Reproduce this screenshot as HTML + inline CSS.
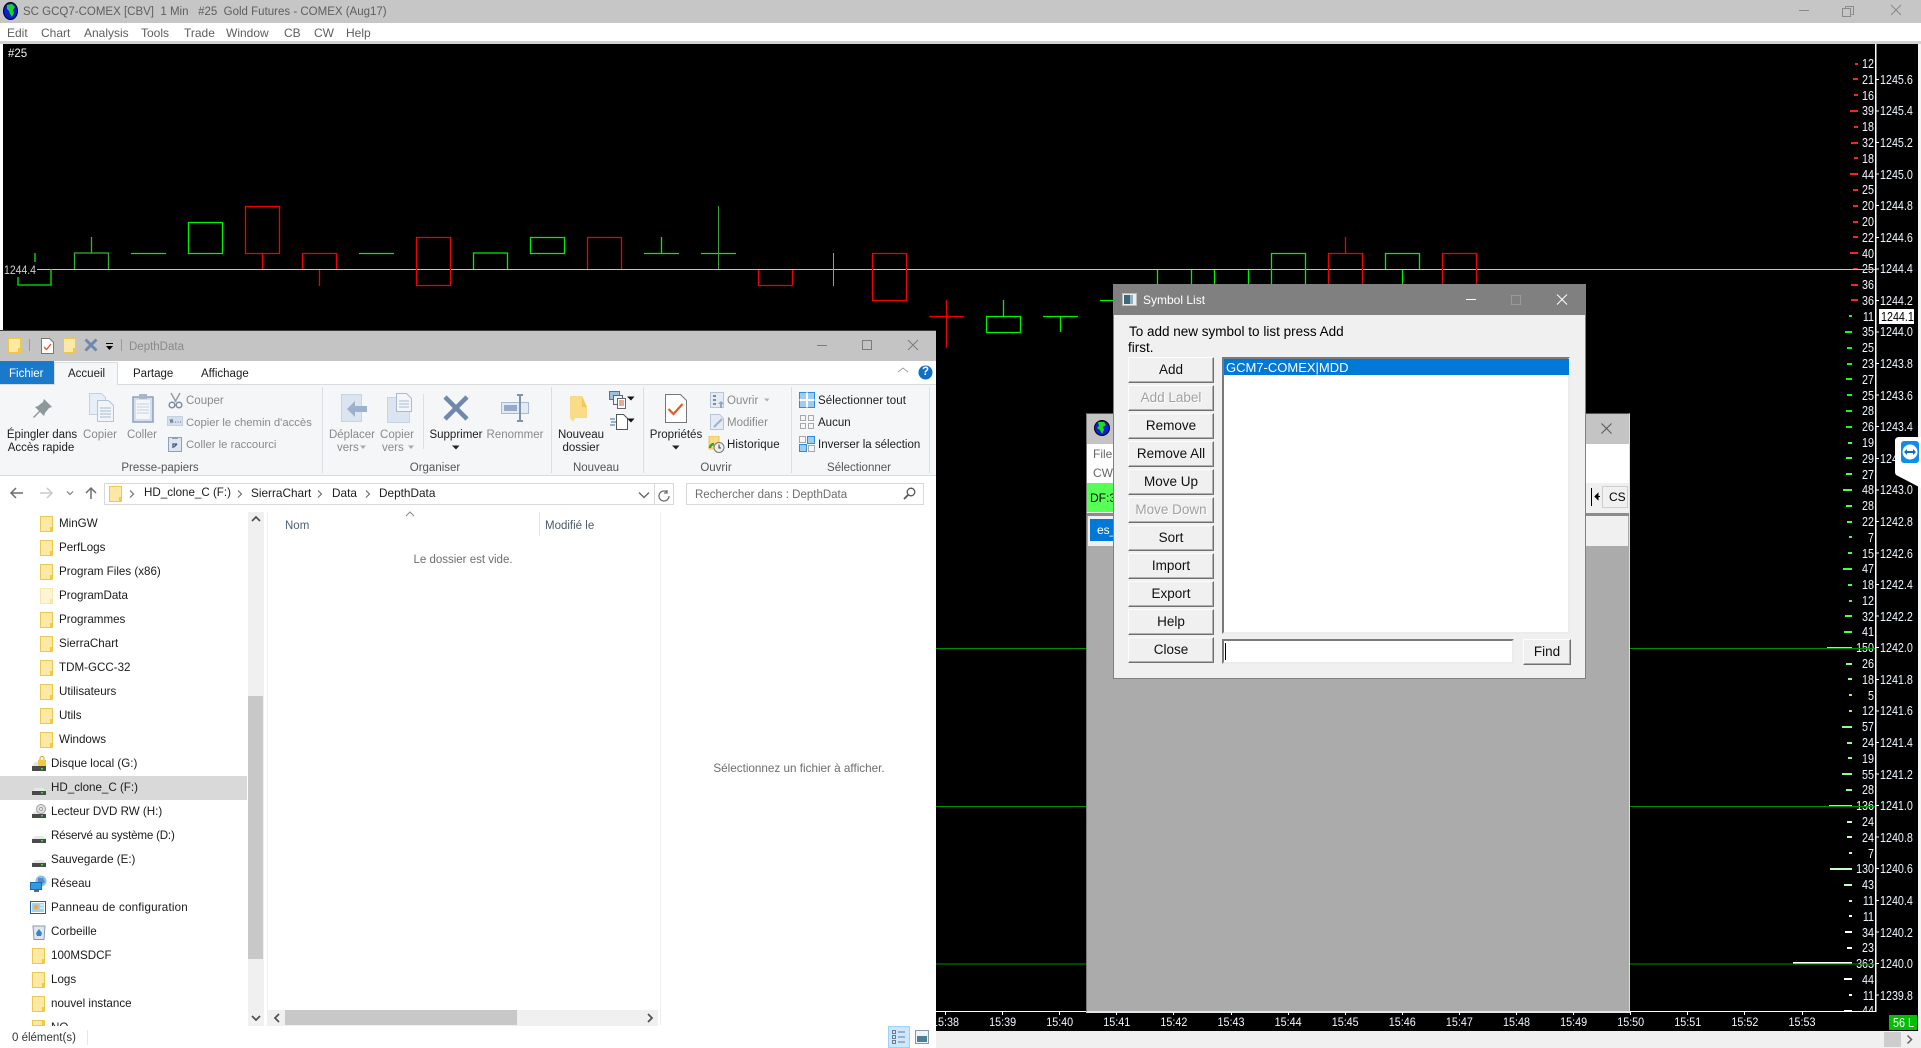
<!DOCTYPE html>
<html><head><meta charset="utf-8"><title>SC GCQ7-COMEX</title>
<style>
html,body{margin:0;padding:0;width:1921px;height:1048px;overflow:hidden;background:#fff}
body{position:relative;font-family:"Liberation Sans",sans-serif;font-size:11.5px;color:#1c1c1c}
div,svg{position:absolute}
.t{position:absolute;white-space:pre;line-height:14px;height:14px;margin-top:1px}
.c{transform:translateX(-50%);text-align:center}
.g{color:#8a8a8a}
.m{color:#5e5e5e;font-size:12px;top:25px}
.tree{font-size:11.6px;color:#1a1a1a}
.f{width:13px;height:16px;background:#fde9a5;border:1px solid #ecc84f;box-sizing:border-box}
.f:after{content:"";position:absolute;right:-1px;bottom:-1px;width:3px;height:5px;background:#f3c944}
.b{left:1128px;width:86px;height:26px;box-sizing:border-box;background:#f0f0f0;border:1px solid;border-color:#fdfdfd #707070 #707070 #fdfdfd;box-shadow:inset -1px -1px 0 #b0b0b0;text-align:center;line-height:23px;font-size:13.5px;color:#101010}
.d{color:#a0a0a0;text-shadow:1px 1px 0 #fff}
.sep{width:1px;background:#dcdfe3}
</style></head><body>

<!-- main SC window chrome -->
<div style="left:0;top:0;width:1921px;height:23px;background:#c6c6c6"></div>
<svg style="left:3px;top:2px" width="15" height="18" viewBox="0 0 15 18"><ellipse cx="7.5" cy="9" rx="7" ry="8.5" fill="#0a1fd0" stroke="#000"/><path d="M4 3l5-1 3 3-2 3 1 3-2 4-2-3-1-3-2-2z" fill="#19d51f"/></svg>
<div class="t" style="left:23px;top:4px;font-size:11.5px;color:#5e5e5e">SC GCQ7-COMEX [CBV]  1 Min   #25  Gold Futures - COMEX (Aug17)</div>
<svg style="left:1795px;top:2px" width="110" height="18"><path d="M4 8.500h10" stroke="#8a8a8a"/><path d="M50.500 4.500h8v8h-2M50.500 4.500v2M47.500 6.500h8v8h-8z" stroke="#8a8a8a" fill="none"/><path d="M96 3l10 10M106 3l-10 10" stroke="#8a8a8a" fill="none"/></svg>
<div class="t m" style="left:7px">Edit</div><div class="t m" style="left:41px">Chart</div><div class="t m" style="left:84px">Analysis</div><div class="t m" style="left:141px">Tools</div><div class="t m" style="left:184px">Trade</div><div class="t m" style="left:226px">Window</div><div class="t m" style="left:284px">CB</div><div class="t m" style="left:314px">CW</div><div class="t m" style="left:346px">Help</div>
<div style="left:0;top:41px;width:1921px;height:3px;background:#d2d2d2"></div>

<!-- chart -->
<svg style="left:0;top:0" width="1921" height="1048" viewBox="0 0 1921 1048" font-family="Liberation Sans, sans-serif">
<rect x="3" y="44" width="1915" height="987" fill="#000"/>
<text x="8" y="57" fill="#f0f0f0" font-size="11.5">#25</text>
<!-- bars -->
<g fill="#ff2020"><rect x="1855" y="63" width="3" height="2"/><rect x="1853" y="78" width="5" height="2"/><rect x="1854" y="94" width="4" height="2"/><rect x="1850" y="110" width="8" height="2"/><rect x="1854" y="126" width="4" height="2"/><rect x="1851" y="142" width="7" height="2"/><rect x="1854" y="157" width="4" height="2"/><rect x="1850" y="173" width="8" height="2"/><rect x="1853" y="189" width="5" height="2"/><rect x="1853" y="205" width="5" height="2"/><rect x="1853" y="221" width="5" height="2"/><rect x="1853" y="236" width="5" height="2"/><rect x="1850" y="252" width="8" height="2"/><rect x="1853" y="268" width="5" height="2"/><rect x="1851" y="284" width="7" height="2"/><rect x="1851" y="299" width="7" height="2"/></g>
<g fill="#10ff10"><rect x="1849" y="315" width="3" height="2"/><rect x="1845" y="331" width="7" height="2"/><rect x="1847" y="347" width="5" height="2"/><rect x="1847" y="363" width="5" height="2"/><rect x="1846" y="378" width="6" height="2"/><rect x="1847" y="394" width="5" height="2"/><rect x="1846" y="410" width="6" height="2"/><rect x="1846" y="426" width="6" height="2"/></g>
<g fill="#48ff48"><rect x="1848" y="442" width="4" height="2"/><rect x="1846" y="457" width="6" height="2"/><rect x="1846" y="473" width="6" height="2"/><rect x="1843" y="489" width="9" height="2"/><rect x="1846" y="505" width="6" height="2"/><rect x="1847" y="521" width="5" height="2"/><rect x="1849" y="536" width="3" height="2"/><rect x="1848" y="552" width="4" height="2"/><rect x="1843" y="568" width="9" height="2"/><rect x="1848" y="584" width="4" height="2"/><rect x="1849" y="600" width="3" height="2"/><rect x="1845" y="615" width="7" height="2"/><rect x="1844" y="631" width="8" height="2"/></g>
<g fill="#88ff88"><rect x="1827" y="647" width="25" height="2"/><rect x="1846" y="663" width="6" height="2"/><rect x="1848" y="678" width="4" height="2"/><rect x="1849" y="694" width="3" height="2"/><rect x="1849" y="710" width="3" height="2"/><rect x="1842" y="726" width="10" height="2"/><rect x="1847" y="742" width="5" height="2"/><rect x="1848" y="757" width="4" height="2"/><rect x="1842" y="773" width="10" height="2"/><rect x="1846" y="789" width="6" height="2"/><rect x="1829" y="805" width="23" height="2"/></g>
<g fill="#c0ffc0"><rect x="1847" y="821" width="5" height="2"/><rect x="1847" y="836" width="5" height="2"/><rect x="1849" y="852" width="3" height="2"/><rect x="1830" y="868" width="22" height="2"/><rect x="1844" y="884" width="8" height="2"/><rect x="1849" y="900" width="3" height="2"/></g>
<g fill="#fff"><rect x="1849" y="915" width="3" height="2"/><rect x="1845" y="931" width="7" height="2"/><rect x="1847" y="947" width="5" height="2"/><rect x="1793" y="962" width="59" height="2"/><rect x="1844" y="978" width="8" height="2"/><rect x="1849" y="994" width="3" height="2"/><rect x="1844" y="1010" width="8" height="2"/></g>
<!-- depth numbers -->
<g transform="translate(1874 0) scale(.86 1)" fill="#eef6ff" font-size="12.5" text-anchor="end">
<text y="68">12</text><text y="84">21</text><text y="100">16</text><text y="115">39</text><text y="131">18</text><text y="147">32</text><text y="163">18</text><text y="179">44</text><text y="194">25</text><text y="210">20</text><text y="226">20</text><text y="242">22</text><text y="258">40</text><text y="273">25</text><text y="289">36</text><text y="305">36</text><text y="321">11</text><text y="336">35</text><text y="352">25</text><text y="368">23</text><text y="384">27</text><text y="400">25</text><text y="415">28</text><text y="431">26</text><text y="447">19</text><text y="463">29</text><text y="479">27</text><text y="494">48</text><text y="510">28</text><text y="526">22</text><text y="542">7</text><text y="558">15</text><text y="573">47</text><text y="589">18</text><text y="605">12</text><text y="621">32</text><text y="636">41</text><text y="652">150</text><text y="668">26</text><text y="684">18</text><text y="700">5</text><text y="715">12</text><text y="731">57</text><text y="747">24</text><text y="763">19</text><text y="779">55</text><text y="794">28</text><text y="810">136</text><text y="826">24</text><text y="842">24</text><text y="858">7</text><text y="873">130</text><text y="889">43</text><text y="905">11</text><text y="921">11</text><text y="937">34</text><text y="952">23</text><text y="968">363</text><text y="984">44</text><text y="1000">11</text><text y="1015">44</text>
</g>
<!-- price labels -->
<g transform="translate(1880 0) scale(.86 1)" fill="#eef6ff" font-size="12.5">
<text y="84">1245.6</text><text y="115">1245.4</text><text y="147">1245.2</text><text y="179">1245.0</text><text y="210">1244.8</text><text y="242">1244.6</text><text y="273">1244.4</text><text y="305">1244.2</text><text y="336">1244.0</text><text y="368">1243.8</text><text y="400">1243.6</text><text y="431">1243.4</text><text y="463">1243.2</text><text y="494">1243.0</text><text y="526">1242.8</text><text y="558">1242.6</text><text y="589">1242.4</text><text y="621">1242.2</text><text y="652">1242.0</text><text y="684">1241.8</text><text y="715">1241.6</text><text y="747">1241.4</text><text y="779">1241.2</text><text y="810">1241.0</text><text y="842">1240.8</text><text y="873">1240.6</text><text y="905">1240.4</text><text y="937">1240.2</text><text y="968">1240.0</text><text y="1000">1239.8</text>
</g>
<path fill="none" stroke="#fff" d="M1876 79.500h3M1876 111h3M1876 142.500h3M1876 174h3M1876 205.500h3M1876 237.500h3M1876 269h3M1876 300.500h3M1876 332h3M1876 363.500h3M1876 395h3M1876 426.500h3M1876 458.500h3M1876 490h3M1876 521.500h3M1876 553h3M1876 584.500h3M1876 616h3M1876 647.500h3M1876 679.500h3M1876 711h3M1876 742.500h3M1876 774h3M1876 805.500h3M1876 837h3M1876 868.500h3M1876 900.500h3M1876 932h3M1876 963.500h3M1876 995h3"/>
<rect x="1879" y="309" width="35" height="15" fill="#fff"/>
<g transform="translate(1881 0) scale(.86 1)" fill="#000" font-size="12.5"><text y="321">1244.1</text></g>
<!-- level lines -->
<path stroke="#c4c4c4" stroke-width="1" d="M37 269.500H1875"/>
<path stroke="#009000" stroke-width="1" d="M936 648.500H1875M936 806.500H1875M936 964H1875"/>
<!-- candles -->
<g fill="none" stroke="#00f000" stroke-width="1.3">
<path d="M18 269v16h33v-16M35 253v16"/>
<path d="M74.500 269v-16h34v16M91.500 253v-16" stroke="#2fb52f"/>
<path d="M131 253.500h35"/>
<path d="M188.500 222.500h34v31h-34z"/>
<path d="M359 253.500h35"/>
<path d="M473.500 269v-16h34v16"/>
<path d="M530.500 237.500h34v16h-34z"/>
<path d="M644 253.500h35M661.500 253v-16"/>
<path d="M701 253.500h35"/><path d="M718.500 269V206" stroke="#3fa03f" stroke-width="1"/>
<path d="M833.500 253v33" stroke="#7fb07f" stroke-width="1"/>
<path d="M1043 316.500h35M1060.500 316v16"/>
<path d="M986.500 316.500h34v16h-34zM1003.500 316v-16"/>
<path d="M1100 300.500h20"/>
<path d="M1157.500 270v20M1191.500 270v20M1214.500 270v20M1248.500 270v20"/>
<path d="M1271.500 290V253.500h34V290"/>
<path d="M1385.500 269V253.500h34V269M1402.500 270v20"/>
</g>
<g fill="none" stroke="#f00000" stroke-width="1.3">
<path d="M245.500 206.500h34v47h-34zM262.500 254v15"/>
<path d="M302.500 269V253.500h34V269M319.500 270v16"/>
<path d="M416.500 237.500h34v48h-34z"/>
<path d="M587.500 269V237.500h34V269"/>
<path d="M758.500 270v15.500h34V270"/>
<path d="M872.500 253.500h34v47h-34z"/>
<path d="M929 316.500h35M946.500 300v48"/>
<path d="M1328.500 290V253.500h34V290M1345.500 253v-16"/>
<path d="M1442.500 290V253.500h34V290"/>
</g>
<rect x="3" y="262" width="34" height="15" fill="#000"/>
<text x="4" y="274" fill="#d0d0d0" font-size="12" textLength="32" lengthAdjust="spacingAndGlyphs">1244.4</text>
<!-- axes -->
<rect x="1875" y="44" width="1.500" height="968" fill="#fff"/>
<rect x="936" y="1012" width="982" height="19" fill="#000"/>
<rect x="936" y="1011" width="940" height="1" fill="#fff"/>
<path stroke="#fff" d="M945.500 1011v4M1002.500 1011v4M1059.500 1011v4M1116.500 1011v4M1173.500 1011v4M1231.500 1011v4M1288.500 1011v4M1345.500 1011v4M1402.500 1011v4M1459.500 1011v4M1516.500 1011v4M1573.500 1011v4M1630.500 1011v4M1687.500 1011v4M1744.500 1011v4M1802.500 1011v4"/>
<g fill="#f0f6ff" font-size="12" text-anchor="middle">
<text x="945.500" y="1026" textLength="27" lengthAdjust="spacingAndGlyphs">15:38</text><text x="1002.600" y="1026" textLength="27" lengthAdjust="spacingAndGlyphs">15:39</text><text x="1059.700" y="1026" textLength="27" lengthAdjust="spacingAndGlyphs">15:40</text><text x="1116.800" y="1026" textLength="27" lengthAdjust="spacingAndGlyphs">15:41</text><text x="1173.900" y="1026" textLength="27" lengthAdjust="spacingAndGlyphs">15:42</text><text x="1231" y="1026" textLength="27" lengthAdjust="spacingAndGlyphs">15:43</text><text x="1288.100" y="1026" textLength="27" lengthAdjust="spacingAndGlyphs">15:44</text><text x="1345.200" y="1026" textLength="27" lengthAdjust="spacingAndGlyphs">15:45</text><text x="1402.300" y="1026" textLength="27" lengthAdjust="spacingAndGlyphs">15:46</text><text x="1459.400" y="1026" textLength="27" lengthAdjust="spacingAndGlyphs">15:47</text><text x="1516.500" y="1026" textLength="27" lengthAdjust="spacingAndGlyphs">15:48</text><text x="1573.600" y="1026" textLength="27" lengthAdjust="spacingAndGlyphs">15:49</text><text x="1630.700" y="1026" textLength="27" lengthAdjust="spacingAndGlyphs">15:50</text><text x="1687.800" y="1026" textLength="27" lengthAdjust="spacingAndGlyphs">15:51</text><text x="1744.900" y="1026" textLength="27" lengthAdjust="spacingAndGlyphs">15:52</text><text x="1802" y="1026" textLength="27" lengthAdjust="spacingAndGlyphs">15:53</text>
</g>
<rect x="1889" y="1015" width="28" height="15" fill="#00c000"/>
<text x="1893" y="1027" fill="#fff" font-size="12.5" textLength="21" lengthAdjust="spacingAndGlyphs">56 L</text>
<!-- right strip & bottom scrollbar -->
<rect x="936" y="1031" width="985" height="17" fill="#f0f0f0"/>
<rect x="1884" y="1032" width="17" height="15" fill="#cdcdcd"/>
<path d="M1907.500 1035.500l4 4-4 4" fill="none" stroke="#606060" stroke-width="1.500"/>
<rect x="1918" y="44" width="3" height="987" fill="#f4f4f4"/>
</svg>

<!-- TeamViewer tab -->
<svg style="left:1894px;top:436px" width="27" height="54" viewBox="0 0 27 54"><path d="M27 1H5Q1 1 1 5V36Q1 39 4 40L27 52z" fill="#fff"/><rect x="7" y="5" width="18" height="22" rx="3" fill="#0e8ee9"/><circle cx="16" cy="16" r="7.500" fill="#fff"/><path d="M10 16l3-3v2h6v-2l3 3-3 3v-2h-6v2z" fill="#0e6fbe"/></svg>

<!-- background SC window -->
<div style="left:1086px;top:413px;width:544px;height:600px;background:#ababab;border-left:1px solid #7a7a7a;border-top:1px solid #555;border-right:1px solid #ddd;border-bottom:2px solid #e6e6e6;box-sizing:border-box"></div>
<div style="left:1087px;top:414px;width:542px;height:30px;background:#c4c4c4"></div>
<svg style="left:1094px;top:420px" width="16" height="16" viewBox="0 0 16 16"><circle cx="8" cy="8" r="7.500" fill="#0a1fd0" stroke="#000"/><path d="M4 2l6 0 2 3-3 2 1 3-2 4-2-4-3-2 2-2z" fill="#19e01f"/></svg>
<svg style="left:1601px;top:423px" width="11" height="11"><path d="M.5.500l10 10M10.500.500l-10 10" stroke="#555" fill="none"/></svg>
<div style="left:1087px;top:444px;width:542px;height:39px;background:#fff"></div>
<div class="t" style="left:1093px;top:446px;font-size:12px;color:#666">File</div>
<div class="t" style="left:1093px;top:465px;font-size:12px;color:#666">CW</div>
<div style="left:1087px;top:483px;width:542px;height:30px;background:#f0f0f0"></div>
<div style="left:1087px;top:483px;width:30px;height:29px;background:#55ff55"></div>
<div class="t" style="left:1090px;top:490px;font-size:12px;color:#000">DF:3</div>
<div style="left:1087px;top:513px;width:542px;height:3px;background:#8c8c8c"></div>
<div style="left:1088px;top:516px;width:540px;height:30px;background:#f0f0f0"></div>
<div style="left:1090px;top:519px;width:30px;height:22px;background:#0078d7"></div>
<div class="t" style="left:1097px;top:522px;font-size:12px;color:#fff">es_</div>
<svg style="left:1586px;top:486px" width="44" height="22"><path d="M5.500 2v18" stroke="#000" fill="none"/><path d="M14 10.500h-5M9 10.500l3-3v6z" stroke="#000" fill="#000"/><rect x="16.500" y=".5" width="25" height="21" fill="#f0f0f0" stroke="#cfcfcf"/></svg>
<div class="t" style="left:1609px;top:489px;font-size:12px;color:#000">CS</div>

<!-- Symbol List dialog -->
<div style="left:1113px;top:284px;width:473px;height:395px;background:#f0f0f0;border:1px solid #808080;box-sizing:border-box"></div>
<div style="left:1113px;top:284px;width:473px;height:31px;background:#808080"></div>
<svg style="left:1122px;top:293px" width="15" height="13" viewBox="0 0 15 13"><rect x=".5" y=".5" width="14" height="12" fill="#eee" stroke="#bbb"/><rect x="2" y="2" width="6" height="9" fill="#3a6a78"/><rect x="8" y="2" width="3" height="9" fill="#8fb2c0"/></svg>
<div class="t" style="left:1143px;top:292px;font-size:12px;color:#fff">Symbol List</div>
<svg style="left:1460px;top:290px" width="115" height="20"><path d="M6 9.500h10" stroke="#fff" fill="none"/><rect x="51.500" y="5.500" width="9" height="9" fill="none" stroke="#9a9a9a"/><path d="M97 4.500l10 10M107 4.500l-10 10" stroke="#fff" fill="none"/></svg>
<div class="t" style="left:1129px;top:324px;font-size:13.5px;color:#000">To add new symbol to list press Add</div>
<div class="t" style="left:1128px;top:340px;font-size:13.5px;color:#000">first.</div>
<div class="b" style="top:357px">Add</div>
<div class="b d" style="top:385px">Add Label</div>
<div class="b" style="top:413px">Remove</div>
<div class="b" style="top:441px">Remove All</div>
<div class="b" style="top:469px">Move Up</div>
<div class="b d" style="top:497px">Move Down</div>
<div class="b" style="top:525px">Sort</div>
<div class="b" style="top:553px">Import</div>
<div class="b" style="top:581px">Export</div>
<div class="b" style="top:609px">Help</div>
<div class="b" style="top:637px">Close</div>
<div style="left:1222px;top:357px;width:348px;height:277px;background:#fff;border:2px solid;border-color:#7a7a7a #ececec #ececec #7a7a7a;box-sizing:border-box"></div>
<div style="left:1224px;top:359px;width:345px;height:16px;background:#0078d7"></div>
<div class="t" style="left:1226px;top:360px;font-size:13px;color:#fff">GCM7-COMEX|MDD</div>
<div style="left:1222px;top:639px;width:292px;height:25px;background:#fff;border:2px solid;border-color:#7a7a7a #ececec #ececec #7a7a7a;box-sizing:border-box"></div>
<div style="left:1225px;top:643px;width:1px;height:17px;background:#000"></div>
<div class="b" style="left:1523px;top:639px;width:48px;height:26px">Find</div>

<!-- Explorer window -->
<div style="left:0;top:330px;width:936px;height:718px;background:#fff;overflow:hidden"></div>
<div style="left:0;top:330px;width:936px;height:1px;background:#3a3a3a"></div>
<div style="left:0;top:331px;width:936px;height:30px;background:#c4c4c4"></div>
<div class="f" style="left:8px;top:338px;height:15px"></div>
<div style="left:29px;top:339px;width:1px;height:12px;background:#9a9a9a"></div>
<svg style="left:41px;top:338px" width="13" height="16"><path d="M.5.500h8l4 4v11H.5z" fill="#fff" stroke="#777"/><path d="M3 9l2.500 2.500L10 6" stroke="#e8521a" fill="none" stroke-width="1.300"/></svg>
<div class="f" style="left:63px;top:338px;height:15px"></div>
<svg style="left:84px;top:338px" width="14" height="14"><path d="M1.500 1.500l11 11M12.500 1.500l-11 11" stroke="#6f88ad" stroke-width="3" fill="none"/></svg>
<svg style="left:105px;top:342px" width="9" height="9"><path d="M1 1.500h7" stroke="#000"/><path d="M1 4h7l-3.500 4z" fill="#000"/></svg>
<div style="left:121px;top:339px;width:1px;height:12px;background:#9a9a9a"></div>
<div class="t g" style="left:129px;top:339px;font-size:11.5px">DepthData</div>
<svg style="left:815px;top:336px" width="110" height="18"><path d="M2 9.500h10" stroke="#7c7c7c" fill="none"/><rect x="47.500" y="4.500" width="9" height="9" fill="none" stroke="#7c7c7c"/><path d="M93 4l10 10M103 4l-10 10" stroke="#7c7c7c" fill="none"/></svg>

<!-- ribbon -->
<div style="left:0;top:361px;width:936px;height:23px;background:#fff"></div>
<div style="left:0;top:384px;width:936px;height:92px;background:#f5f6f7;border-top:1px solid #dadbdc;border-bottom:1px solid #dadbdc;box-sizing:border-box"></div>
<div style="left:0;top:361px;width:54px;height:23px;background:#1979ca"></div>
<div class="t" style="left:9px;top:366px;color:#fff">Fichier</div>
<div style="left:54px;top:362px;width:64px;height:23px;background:#f5f6f7;border:1px solid #dadbdc;border-bottom:0;box-sizing:border-box"></div>
<div class="t" style="left:68px;top:366px">Accueil</div>
<div class="t" style="left:133px;top:366px">Partage</div>
<div class="t" style="left:201px;top:366px">Affichage</div>
<svg style="left:897px;top:366px" width="12" height="8"><path d="M1 6l5-4 5 4" fill="none" stroke="#a0a0a0"/></svg>
<svg style="left:918px;top:365px" width="15" height="15"><circle cx="7.500" cy="7.500" r="7" fill="#0f6fc6"/></svg>
<div class="t" style="left:922px;top:365px;color:#fff;font-weight:bold;font-size:11.5px;line-height:13px">?</div>

<!-- clipboard group -->
<svg style="left:31px;top:398px" width="22" height="22" viewBox="0 0 22 22"><path d="M13 1l8 8-3 1-4 5-1 3-4-4-6 6-1-1 6-6-4-4 3-1 5-4z" fill="#8e979c"/></svg>
<svg style="left:89px;top:393px" width="25" height="29" viewBox="0 0 25 29"><path d="M.5.500h12l4 4v17H.5z" fill="#e8eef7" stroke="#c5d0df"/><path d="M8.500 7.500h11l5 5v16h-16z" fill="#f1f4f9" stroke="#b5c3d6"/><path d="M11 15h11M11 18h11M11 21h11M11 24h11" stroke="#a9bbd2"/></svg>
<svg style="left:132px;top:393px" width="22" height="30" viewBox="0 0 22 30"><rect x="1" y="4" width="20" height="25" fill="#d6deec" stroke="#8b9fbd" stroke-width="1.500"/><rect x="4" y="7" width="14" height="19" fill="#f3f6fb"/><rect x="7" y="1" width="8" height="5" fill="#a7b5c8"/><path d="M5 11h12M5 14h12M5 17h12M5 20h12" stroke="#c5d0e0"/></svg>
<svg style="left:168px;top:392px" width="15" height="17" viewBox="0 0 15 17"><path d="M3 1l5 9M12 1l-5 9" stroke="#9a9fa6" stroke-width="1.500" fill="none"/><circle cx="4" cy="13" r="2.800" fill="none" stroke="#7c8ca3" stroke-width="1.500"/><circle cx="11" cy="13" r="2.800" fill="none" stroke="#7c8ca3" stroke-width="1.500"/></svg>
<svg style="left:167px;top:416px" width="16" height="10"><rect x=".5" y=".5" width="15" height="9" fill="#d3deee" stroke="#c4cfdf"/><path d="M3 3l1 4 1-4 1 4M8 6h1M10.500 6h1M13 6h1" stroke="#6d7f97" fill="none"/></svg>
<svg style="left:168px;top:436px" width="14" height="16"><rect x=".5" y="1.500" width="13" height="14" fill="#dde5f1" stroke="#8fa1ba"/><path d="M4 1h6v2H4z" fill="#8fa1ba"/><path d="M5 12V8h4M9 8L6 11" stroke="#46597a" fill="none" stroke-width="1.300"/></svg>
<div class="t c" style="left:42px;top:427px">Épingler dans</div>
<div class="t c" style="left:41px;top:440px">Accès rapide</div>
<div class="t c g" style="left:100px;top:427px">Copier</div>
<div class="t c g" style="left:142px;top:427px">Coller</div>
<div class="t g" style="left:186px;top:393px">Couper</div>
<div class="t g" style="left:186px;top:415px;font-size:11.3px">Copier le chemin d'accès</div>
<div class="t g" style="left:186px;top:437px;font-size:11.3px">Coller le raccourci</div>
<div class="t c" style="left:160px;top:460px;color:#555">Presse-papiers</div>
<div class="sep" style="left:322px;top:387px;height:86px"></div>

<!-- organise group -->
<svg style="left:341px;top:394px" width="27" height="28" viewBox="0 0 27 28"><rect x=".5" y=".5" width="20" height="27" fill="#dbe4f1" stroke="#c8d4e6"/><path d="M26 16h-12v-5l-8 8 8 8v-5h12z" transform="translate(0 -4)" fill="#9db1cd"/></svg>
<svg style="left:387px;top:392px" width="26" height="31" viewBox="0 0 26 31"><rect x=".5" y="5.500" width="22" height="25" fill="#dbe4f1" stroke="#c8d4e6"/><path d="M9.500 1.500h10l5 5v13h-15z" fill="#f4f6fa" stroke="#a9bbd2"/><path d="M12 9h10M12 12h10M12 15h10" stroke="#a9bbd2"/></svg>
<div class="t c g" style="left:352px;top:427px">Déplacer</div>
<div class="t g" style="left:337px;top:440px">vers</div>
<svg style="left:360px;top:445px" width="7" height="5"><path d="M0 .5h6L3 4z" fill="#a8a8a8"/></svg>
<div class="t c g" style="left:397px;top:427px">Copier</div>
<div class="t g" style="left:382px;top:440px">vers</div>
<svg style="left:408px;top:445px" width="7" height="5"><path d="M0 .5h6L3 4z" fill="#a8a8a8"/></svg>
<div class="sep" style="left:423px;top:394px;height:55px"></div>
<svg style="left:443px;top:395px" width="26" height="26" viewBox="0 0 26 26"><path d="M2 2l22 22M24 2L2 24" stroke="#6f88ad" stroke-width="4.500" fill="none"/></svg>
<div class="t c" style="left:456px;top:427px">Supprimer</div>
<svg style="left:452px;top:445px" width="8" height="5"><path d="M0 .5h7.500L4 4.500z" fill="#222"/></svg>
<svg style="left:500px;top:394px" width="30" height="28" viewBox="0 0 30 28"><rect x="1.500" y="8.500" width="27" height="11" fill="#e2eaf4" stroke="#a9bbd2"/><rect x="4" y="11" width="13" height="6" fill="#95aac8"/><path d="M17 1h6M17 27h6M20 1v26" stroke="#7f93ad" stroke-width="2" fill="none"/></svg>
<div class="t c g" style="left:515px;top:427px">Renommer</div>
<div class="t c" style="left:435px;top:460px;color:#555">Organiser</div>
<div class="sep" style="left:551px;top:387px;height:86px"></div>

<!-- new group -->
<svg style="left:569px;top:395px" width="20" height="28" viewBox="0 0 20 28"><path d="M1 1h12v11h5v11H6l-2 4-3-4z" fill="#fbdc86"/><path d="M13 1l5 11h-5z" fill="#f2c856"/></svg>
<svg style="left:609px;top:391px" width="22" height="18" viewBox="0 0 22 18"><rect x=".5" y=".5" width="10" height="8" fill="#9cc0e0" stroke="#3f79ad"/><rect x="4.500" y="4.500" width="9" height="9" fill="#eef3fa" stroke="#666"/><rect x="8.500" y="7.500" width="8" height="10" fill="#fff" stroke="#666"/><path d="M10 10h5M10 12h5M10 14h5" stroke="#d0532b"/></svg>
<svg style="left:627px;top:396px" width="8" height="5"><path d="M0 .5h7.500L4 4.500z" fill="#111"/></svg>
<svg style="left:610px;top:413px" width="18" height="18" viewBox="0 0 18 18"><path d="M6.500 1.500h7l4 4v11h-11z" fill="#fff" stroke="#555"/><path d="M0 6h5M1 9h5M0 12h5" stroke="#2f6fb0"/></svg>
<svg style="left:627px;top:418px" width="8" height="5"><path d="M0 .5h7.500L4 4.500z" fill="#111"/></svg>
<div class="t c" style="left:581px;top:427px">Nouveau</div>
<div class="t c" style="left:581px;top:440px">dossier</div>
<div class="t c" style="left:596px;top:460px;color:#555">Nouveau</div>
<div class="sep" style="left:643px;top:387px;height:86px"></div>

<!-- open group -->
<svg style="left:665px;top:394px" width="22" height="29" viewBox="0 0 22 29"><path d="M.5.500h15l6 6v22H.5z" fill="#fff" stroke="#777"/><path d="M3.500 15l5 5 9-10" stroke="#ec5a1c" fill="none" stroke-width="2.200"/></svg>
<div class="t c" style="left:676px;top:427px">Propriétés</div>
<svg style="left:672px;top:445px" width="8" height="5"><path d="M0 .5h7.500L4 4.500z" fill="#222"/></svg>
<svg style="left:710px;top:392px" width="15" height="17"><rect x=".5" y=".5" width="13" height="15" fill="#e5ebf4" stroke="#b8c5d8"/><path d="M3 4h3M3 8h3M3 12h3" stroke="#7a8ca8" stroke-width="2"/><path d="M8 12l3-3 3 3h-2v4h-2v-4z" fill="#8fa5c4"/></svg>
<svg style="left:710px;top:414px" width="15" height="16"><path d="M.5.500h9l4 4v11H.5z" fill="#e5ebf4" stroke="#b8c5d8"/><path d="M4 13l8-8" stroke="#9db1cd" stroke-width="2"/></svg>
<svg style="left:708px;top:436px" width="17" height="17" viewBox="0 0 17 17"><path d="M1 0h10v13H1z" fill="#fbdc86" stroke="#e2b93c" stroke-width=".8"/><circle cx="11" cy="11.500" r="5" fill="#f0f0f0" stroke="#777"/><path d="M11 8.500v3.500h2" stroke="#333" fill="none"/><path d="M2 12a4 4 0 0 1 4-4" stroke="#2fa52f" stroke-width="2.500" fill="none"/></svg>
<div class="t g" style="left:727px;top:393px">Ouvrir</div>
<svg style="left:764px;top:398px" width="6" height="4"><path d="M0 .5h5.500L3 3.500z" fill="#b0b0b0"/></svg>
<div class="t g" style="left:727px;top:415px">Modifier</div>
<div class="t" style="left:727px;top:437px;letter-spacing:.1px">Historique</div>
<div class="t c" style="left:716px;top:460px;color:#555">Ouvrir</div>
<div class="sep" style="left:791px;top:387px;height:86px"></div>

<!-- select group -->
<svg style="left:799px;top:392px" width="16" height="16"><rect x=".5" y=".5" width="15" height="15" fill="#9fcdf2" stroke="#2c8ede"/><path d="M8 .5v15M.5 8h15" stroke="#fff" stroke-width="2"/></svg>
<svg style="left:800px;top:415px" width="15" height="15"><g fill="none" stroke="#a8a8a8"><rect x=".5" y=".5" width="5" height="5"/><rect x="8.500" y=".5" width="5" height="5"/><rect x=".5" y="8.500" width="5" height="5"/><rect x="8.500" y="8.500" width="5" height="5"/></g></svg>
<svg style="left:799px;top:436px" width="16" height="16"><rect x="8.500" y=".5" width="7" height="7" fill="#9fcdf2" stroke="#2c8ede"/><rect x=".5" y="8.500" width="7" height="7" fill="#9fcdf2" stroke="#2c8ede"/><rect x=".5" y=".5" width="6" height="6" fill="none" stroke="#a8a8a8"/><rect x="9.500" y="9.500" width="6" height="6" fill="none" stroke="#a8a8a8"/></svg>
<div class="t" style="left:818px;top:393px;letter-spacing:.1px">Sélectionner tout</div>
<div class="t" style="left:818px;top:415px">Aucun</div>
<div class="t" style="left:818px;top:437px">Inverser la sélection</div>
<div class="t c" style="left:859px;top:460px;color:#555">Sélectionner</div>
<div class="sep" style="left:929px;top:387px;height:86px"></div>

<!-- address row -->
<svg style="left:8px;top:485px" width="92" height="16"><path d="M3 8h12M8 3L3 8l5 5" fill="none" stroke="#6d6d6d" stroke-width="1.500"/><path d="M32 8h12M39 3l5 5-5 5" fill="none" stroke="#c8c8c8" stroke-width="1.500"/><path d="M59 6.500l3 3 3-3" fill="none" stroke="#8a8a8a" stroke-width="1.300"/><path d="M83 14V3M78 8l5-5 5 5" fill="none" stroke="#6d6d6d" stroke-width="1.500"/></svg>
<div style="left:104px;top:483px;width:570px;height:22px;border:1px solid #d9d9d9;box-sizing:border-box"></div>
<div style="left:654px;top:483px;width:1px;height:22px;background:#d9d9d9"></div>
<div class="f" style="left:109px;top:486px"></div>
<div class="t" style="left:144px;top:485px;font-size:11.6px">HD_clone_C (F:)</div>
<div class="t" style="left:251px;top:485px;font-size:11.8px">SierraChart</div>
<div class="t" style="left:332px;top:485px;font-size:11.8px">Data</div>
<div class="t" style="left:379px;top:485px;font-size:11.8px">DepthData</div>
<svg style="left:128px;top:489px" width="250" height="10"><g fill="none" stroke="#6d6d6d" stroke-width="1.200"><path d="M2 1.500l3.500 3.500L2 8.500"/><path d="M110 1.500l3.500 3.500L110 8.500"/><path d="M190 1.500l3.500 3.500L190 8.500"/><path d="M238 1.500l3.500 3.500L238 8.500"/></g></svg>
<svg style="left:638px;top:490px" width="34" height="12"><path d="M1 2.500l5 5 5-5" fill="none" stroke="#6d6d6d" stroke-width="1.500"/><path d="M31 6a5 5 0 1 1-2-4M29 0v3h-3" fill="none" stroke="#6d6d6d" stroke-width="1.300"/></svg>
<div style="left:686px;top:483px;width:238px;height:22px;border:1px solid #d9d9d9;box-sizing:border-box"></div>
<div class="t" style="left:695px;top:487px;color:#6d6d6d;font-size:11.5px">Rechercher dans : DepthData</div>
<svg style="left:903px;top:487px" width="13" height="13"><circle cx="8" cy="5" r="3.800" fill="none" stroke="#555" stroke-width="1.300"/><path d="M5 8l-4 4" stroke="#555" stroke-width="1.800"/></svg>

<!-- nav tree -->
<div style="left:0;top:776px;width:247px;height:24px;background:#d9d9d9"></div>
<div class="f" style="left:40px;top:516px"></div><div class="t tree" style="left:59px;top:516px">MinGW</div>
<div class="f" style="left:40px;top:540px"></div><div class="t tree" style="left:59px;top:540px">PerfLogs</div>
<div class="f" style="left:40px;top:564px"></div><div class="t tree" style="left:59px;top:564px">Program Files (x86)</div>
<div class="f" style="left:40px;top:588px;opacity:.45"></div><div class="t tree" style="left:59px;top:588px">ProgramData</div>
<div class="f" style="left:40px;top:612px"></div><div class="t tree" style="left:59px;top:612px">Programmes</div>
<div class="f" style="left:40px;top:636px"></div><div class="t tree" style="left:59px;top:636px">SierraChart</div>
<div class="f" style="left:40px;top:660px"></div><div class="t tree" style="left:59px;top:660px">TDM-GCC-32</div>
<div class="f" style="left:40px;top:684px"></div><div class="t tree" style="left:59px;top:684px">Utilisateurs</div>
<div class="f" style="left:40px;top:708px"></div><div class="t tree" style="left:59px;top:708px">Utils</div>
<div class="f" style="left:40px;top:732px"></div><div class="t tree" style="left:59px;top:732px">Windows</div>

<svg style="left:31px;top:756px" width="16" height="16"><path d="M1 10l3-4h8l3 4z" fill="#e4e4e4"/><rect x="1" y="10" width="14" height="5" fill="#4a4a4a"/><rect x="10" y="12" width="2" height="1.500" fill="#35e03a"/><rect x="7" y="4" width="8" height="6" fill="#f3c944"/><path d="M9 4V2.500a2 2 0 0 1 4 0V4" stroke="#c9a02b" fill="none"/></svg>
<div class="t tree" style="left:51px;top:756px">Disque local (G:)</div>
<svg style="left:31px;top:781px" width="16" height="16"><path d="M1 10l3-3h8l3 3z" fill="#e8e8e8"/><rect x="1" y="10" width="14" height="4" fill="#4a4a4a"/><rect x="10" y="11" width="2" height="1.500" fill="#35e03a"/></svg>
<div class="t tree" style="left:51px;top:780px">HD_clone_C (F:)</div>
<svg style="left:31px;top:804px" width="16" height="16"><path d="M1 10l3-3h8l3 3z" fill="#e8e8e8"/><rect x="1" y="10" width="14" height="4" fill="#4a4a4a"/><rect x="10" y="11" width="2" height="1.500" fill="#35e03a"/><circle cx="10" cy="5" r="4.500" fill="#e0e0e0" stroke="#a0a0a0"/><circle cx="10" cy="5" r="1.500" fill="#fff" stroke="#a0a0a0"/></svg>
<div class="t tree" style="left:51px;top:804px">Lecteur DVD RW (H:)</div>
<svg style="left:31px;top:829px" width="16" height="16"><path d="M1 10l3-3h8l3 3z" fill="#e8e8e8"/><rect x="1" y="10" width="14" height="4" fill="#4a4a4a"/><rect x="10" y="11" width="2" height="1.500" fill="#35e03a"/></svg>
<div class="t tree" style="left:51px;top:828px;letter-spacing:-.2px">Réservé au système (D:)</div>
<svg style="left:31px;top:853px" width="16" height="16"><path d="M1 10l3-3h8l3 3z" fill="#e8e8e8"/><rect x="1" y="10" width="14" height="4" fill="#4a4a4a"/><rect x="10" y="11" width="2" height="1.500" fill="#35e03a"/></svg>
<div class="t tree" style="left:51px;top:852px">Sauvegarde (E:)</div>
<svg style="left:30px;top:875px" width="17" height="17"><circle cx="11" cy="6" r="5.500" fill="#8cc0ea"/><path d="M8 3l5 0 2 4-4 3-3-3z" fill="#4e8fca"/><rect x=".5" y="7.500" width="11" height="7" fill="#2e9be8" stroke="#1a6cb0"/><path d="M4 16h5" stroke="#666" stroke-width="2"/></svg>
<div class="t tree" style="left:51px;top:876px">Réseau</div>
<svg style="left:30px;top:901px" width="16" height="14"><rect x=".5" y=".5" width="15" height="12" fill="#fff" stroke="#1a5fa8"/><rect x="2" y="2" width="12" height="9" fill="#a3d0f5"/><circle cx="6" cy="6" r="2.500" fill="#e8b52e"/><path d="M10 4h4M10 7h4" stroke="#fff"/></svg>
<div class="t tree" style="left:51px;top:900px;letter-spacing:.2px">Panneau de configuration</div>
<svg style="left:32px;top:924px" width="14" height="16"><path d="M1 2h12l-1 13.500H2z" fill="#dfe6ee" stroke="#8d98a5"/><path d="M4 9l3-4 3 4-1 3H5z" fill="#2f86d6"/></svg>
<div class="t tree" style="left:51px;top:924px">Corbeille</div>
<div class="f" style="left:32px;top:948px"></div><div class="t tree" style="left:51px;top:948px">100MSDCF</div>
<div class="f" style="left:32px;top:972px"></div><div class="t tree" style="left:51px;top:972px">Logs</div>
<div class="f" style="left:32px;top:996px"></div><div class="t tree" style="left:51px;top:996px">nouvel instance</div>
<div class="f" style="left:32px;top:1020px;height:6px;overflow:hidden"></div><div class="t tree" style="left:51px;top:1020px;height:5px;overflow:hidden">NO</div>

<!-- nav scrollbar -->
<div style="left:248px;top:512px;width:16px;height:514px;background:#f0f0f0"></div>
<div style="left:248px;top:696px;width:15px;height:263px;background:#c8c8c8"></div>
<svg style="left:250px;top:515px" width="12" height="8"><path d="M2 6l4-4 4 4" fill="none" stroke="#505050" stroke-width="1.700"/></svg>
<svg style="left:250px;top:1014px" width="12" height="8"><path d="M2 2l4 4 4-4" fill="none" stroke="#505050" stroke-width="1.700"/></svg>

<!-- column area -->
<div style="left:267px;top:512px;width:1px;height:514px;background:#f0f0f0"></div>
<div class="t" style="left:285px;top:518px;color:#4c607a">Nom</div>
<div class="t" style="left:545px;top:518px;color:#4c5a6a">Modifié le</div>
<div style="left:539px;top:512px;width:1px;height:24px;background:#e5e5e5"></div>
<div style="left:660px;top:512px;width:1px;height:514px;background:#f0f0f0"></div>
<svg style="left:405px;top:511px" width="10" height="6"><path d="M1 5l4-4 4 4" fill="none" stroke="#8a8a8a"/></svg>
<div class="t c" style="left:463px;top:552px;color:#6d6d6d">Le dossier est vide.</div>
<div class="t c" style="left:799px;top:761px;color:#6d6d6d;font-size:11.7px">Sélectionnez un fichier à afficher.</div>
<div style="left:268px;top:1010px;width:390px;height:16px;background:#f0f0f0"></div>
<div style="left:285px;top:1010px;width:232px;height:15px;background:#c8c8c8"></div>
<svg style="left:272px;top:1012px" width="384" height="12"><path d="M7 2L3 6l4 4" fill="none" stroke="#505050" stroke-width="1.700"/><path d="M376 2l4 4-4 4" fill="none" stroke="#505050" stroke-width="1.700"/></svg>

<!-- status -->
<div class="t" style="left:12px;top:1030px;color:#333">0 élément(s)</div>
<div style="left:87px;top:1030px;width:1px;height:15px;background:#e8e8e8"></div>
<div style="left:888px;top:1026px;width:22px;height:22px;background:#cce8ff;border:1px solid #99d1ff;box-sizing:border-box"></div>
<svg style="left:892px;top:1030px" width="38" height="15"><g fill="none" stroke="#6c7b8a"><rect x=".5" y=".5" width="3" height="3"/><rect x=".5" y="5.500" width="3" height="3"/><rect x=".5" y="10.500" width="3" height="3"/><path d="M6 2h7M6 7h7M6 12h7"/></g><rect x="23.500" y=".5" width="13" height="13" fill="#eef3f8" stroke="#8a98a8"/><rect x="25" y="6" width="10" height="6" fill="#4e7f9a"/></svg>
</body></html>
